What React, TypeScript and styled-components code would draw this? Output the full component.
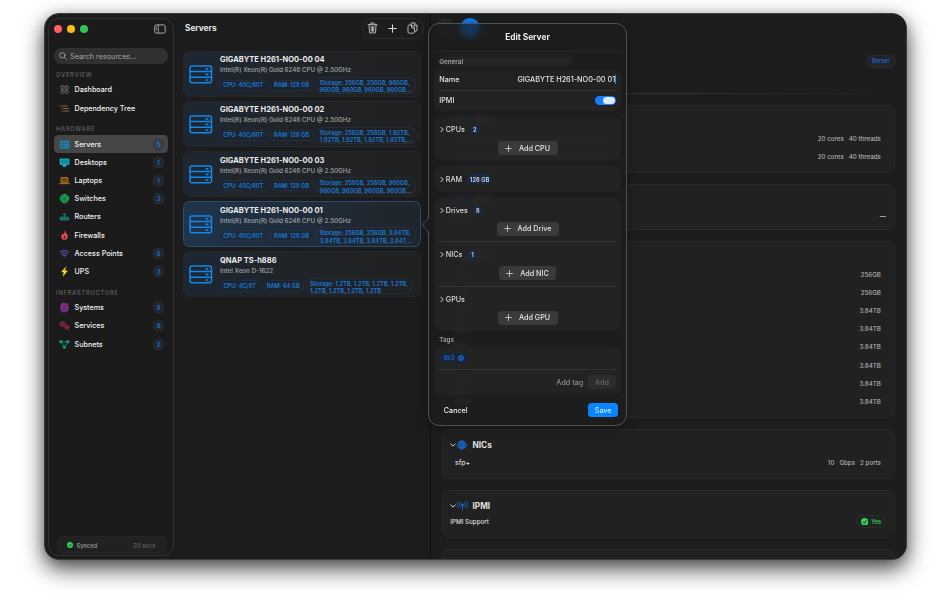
import React from 'react';
import styled, { createGlobalStyle, css } from 'styled-components';

const Global = createGlobalStyle`
  * { box-sizing: border-box; }
  html, body { margin: 0; background: #fff; }
  body { font-family: Inter, "Liberation Sans", sans-serif; font-size: 7.2px; font-weight: 500; color: #e6e6e6; }
`;

const Desktop = styled.main`
  width: 950px; height: 594px; overflow: hidden; background: #fff; padding: 13px 0 0 43.5px;
`;
const Window = styled.div`
  position: relative; width: 863px; height: 547px; border-radius: 15px; background: #1c1c1d;
  border: 1px solid #3c3c3c; display: flex;
  box-shadow: 0 9px 22px rgba(0,0,0,.7), 0 2px 12px rgba(0,0,0,.14);
`;

/* ---------- sidebar ---------- */
const Sidebar = styled.aside`
  width: 126px; margin: 4px 0 3px 3.5px; border: 1px solid #323234; border-radius: 11px;
  background: #1b1b1c; display: flex; flex-direction: column; padding: 0 5px; flex: none;
`;
const TitleBar = styled.div`
  height: 19px; display: flex; align-items: center; justify-content: space-between; padding: 0 2px 0 0;
`;
const Lights = styled.div` display: flex; gap: 5px; `;
const Light = styled.span<{ $c: string }>`
  width: 8px; height: 8px; border-radius: 50%; background: ${p => p.$c};
`;
const Search = styled.div`
  height: 16px; margin: 10px 0 0; border-radius: 8px; background: #303031; color: #a4a4a5;
  display: flex; align-items: center; gap: 3px; padding-left: 5px; font-weight: 400; font-size: 7.25px;
`;
const GroupTitle = styled.h2<{ $top: number }>`
  margin: ${p => p.$top}px 0 0; height: 10px; line-height: 10px; padding-left: 2px;
  font-size: 5.6px; font-weight: 600; letter-spacing: 0.86px; color: #5c5c5d;
`;
const NavList = styled.nav`
  display: flex; flex-direction: column; margin-top: .6px;
`;
const NavItem = styled.div<{ $active?: boolean }>`
  height: 18.2px; display: flex; align-items: center; padding: 0 4px 0 5px; border-radius: 4.5px;
  font-size: 7.18px; color: #f4f4f4;
  background: ${p => (p.$active ? '#464646' : 'transparent')};
`;
const NavIcon = styled.span`
  width: 11px; height: 11px; margin-right: 4.5px; display: flex; align-items: center; justify-content: center; flex: none;
`;
const Count = styled.span<{ $active?: boolean }>`
  margin-left: auto; width: 11px; height: 11px; border-radius: 50%; display: grid; place-items: center;
  font-size: 5.7px; font-weight: 600; color: #1d74da;
  background: ${p => (p.$active ? '#39404a' : '#20262e')}; box-shadow: inset 0 0 0 .5px #30353b;
`;
const SyncBar = styled.div`
  margin: auto 2.5px 1px; height: 18px; border-radius: 5px; background: #212122; display: flex; align-items: center;
  padding: 0 9px 0 9.5px; font-size: 5.7px; font-weight: 600; color: #929292; border: .5px solid #262627;
`;
const SyncTime = styled.span` margin-left: auto; color: #5d5d5e; font-size: 5.85px; `;
const SyncText = styled.span` margin-left: 3.5px; `;

/* ---------- list ---------- */
const ListPane = styled.section`
  width: 256.5px; flex: none; padding: 0 8.2px 0 8.5px; display: flex; flex-direction: column; border-right: 1px solid #0f0f10;
  background: #1c1c1d;
`;
const ListHeader = styled.header`
  height: 28.5px; display: flex; align-items: center; justify-content: space-between;
`;
const ListTitle = styled.h1` margin: 0 0 0 2.5px; font-size: 8.25px; font-weight: 700; `;
const Toolbar = styled.div`
  width: 62px; height: 21px; border-radius: 11px; border: 1px solid #2c2c2d; background: #1d1d1e; display: flex;
  align-items: center; justify-content: space-between; padding: 0 5px 0 4px; margin-right: -2.8px;
`;
const Cards = styled.div` display: flex; flex-direction: column; gap: 4.15px; margin-top: 8.2px; `;
const Card = styled.article<{ $active?: boolean }>`
  height: 46px; border-radius: 6.5px; display: flex; padding: 3.6px 0 0 6px;
  border: 1px solid ${p => (p.$active ? '#2a4b74' : '#25282b')};
  background: ${p => (p.$active
    ? 'linear-gradient(100deg, #20344b 0%, #1f2f41 30%, #20262d 85%)'
    : 'linear-gradient(100deg, #1e2732 0%, #1f252b 35%, #202122 80%)')};
`;
const CardIcon = styled.div` margin: 9.4px .6px 0 -.6px; height: 19px; width: 30.5px; flex: none; `;
const CardBody = styled.div` flex: 1; min-width: 0; `;
const CardTitle = styled.div` font-size: 7.5px; line-height: 10px; font-weight: 700; color: #ececec; white-space: nowrap; `;
const CardSub = styled.div` font-size: 6.25px; line-height: 11px; color: #a5a5a5; white-space: nowrap; `;
const Chips = styled.div` display: flex; align-items: center; gap: 2px; margin-left: -1px; height: 18px; `;
const Chip = styled.span<{ $w: number }>`
  width: ${p => p.$w}px; height: 11.5px; border-radius: 6px; display: grid; place-items: center; white-space: nowrap;
  font-size: 5.65px; font-weight: 600; color: #1d7bd6; background: rgba(24,38,54,.45); border: .5px solid rgba(60,75,90,.25);
`;
const StorageChip = styled.span`
  height: 16.5px; border-radius: 7px; padding: 1px 3.3px 0; font-size: 5.72px; line-height: 7.2px; font-weight: 600; color: #1d7bd6;
  white-space: nowrap; background: rgba(24,38,54,.25); border: .5px solid rgba(60,75,90,.25);
`;

/* ---------- detail ---------- */
const Detail = styled.section`
  flex: 1; min-width: 0; overflow: hidden; padding: 0 11px 0 11px; background: #1d1d1e;
  border-radius: 0 14px 14px 0; display: flex; flex-direction: column;
`;
const DetailToolbar = styled.div` height: 28px; flex: none; display: flex; align-items: center; gap: 5px; margin-left: -6.5px; `;
const RoundButton = styled.span<{ $blue?: boolean }>`
  width: 20px; height: 20px; border-radius: 50%; background: ${p => (p.$blue ? '#0a7cf5' : '#2a2a2b')};
  display: grid; place-items: center;
`;
const DetailHead = styled.div`
  height: 38px; flex: none; display: flex; align-items: center; justify-content: space-between;
`;
const Obscured = styled.span<{ $w: number; $h?: number }>`
  width: ${p => p.$w}px; height: ${p => p.$h ?? 5}px; border-radius: 2px; background: #58585a;
`;
const TypeBadge = styled.span`
  height: 13px; padding: 0 4.8px; border-radius: 5.5px; background: #222428; border: .5px solid #2a2b2e; color: #1d66cc;
  font-size: 5.6px; font-weight: 600; display: grid; place-items: center; margin-right: -1px;
`;
const FadeLine = styled.div`
  height: 1px; flex: none; margin: 13px 0 11px; background: linear-gradient(90deg, #2c2c2d, #333334 50%, #1d1d1e);
`;
const Panel = styled.div<{ $h: number; $gap?: number }>`
  height: ${p => p.$h}px; flex: none; margin-bottom: ${p => p.$gap ?? 11}px; border: 1px solid #2a2a2b; border-radius: 7.5px;
  background: #212122; padding: 6.5px 12.6px 0 7px;
`;
const PanelTitle = styled.div`
  height: 17px; display: flex; align-items: center; font-size: 8.25px; font-weight: 700; color: #e0e0e0;
`;
const PanelIcon = styled.span` width: 11px; height: 11px; margin: 0 4.7px 0 1.3px; display: grid; place-items: center; `;
const PanelRows = styled.div` padding-left: 5.5px; `;
const PanelRow = styled.div`
  height: 18.2px; display: flex; align-items: center; justify-content: space-between; font-size: 6.2px; color: #b2b2b2;
`;
const RowName = styled.span` color: #dcdcdc; font-size: 6.9px; `;
const RowValue = styled.span` display: flex; gap: 5px; `;
const SupportRow = styled.div`
  height: 15px; display: flex; align-items: center; justify-content: space-between; font-size: 6.24px; color: #dedede;
  margin: 0 -5px 0 .8px;
`;
const YesBadge = styled.span`
  height: 12.5px; width: 30px; border-radius: 6.5px; background: #202522; border: .5px solid #29302b; color: #34c759;
  display: flex; align-items: center; justify-content: center; gap: 3px; font-size: 5.7px; font-weight: 600;
`;

/* ---------- popover ---------- */
const Popover = styled.div`
  position: absolute; left: 383.5px; top: 9px; width: 199px; height: 403px; border-radius: 11px;
  border: 1px solid #515152; background: rgba(28,28,29,.72); backdrop-filter: blur(3px);
  box-shadow: 0 3px 12px rgba(0,0,0,.35); display: flex; flex-direction: column; padding: 0 5px;
`;
const Arrow = styled.svg` position: absolute; left: 376.5px; top: 198px; width: 9px; height: 26px; `;
const PopTitle = styled.div`
  height: 27.5px; flex: none; display: grid; place-items: center; font-size: 8.3px; font-weight: 700; color: #ececec; border-bottom: 1px solid #272728;
`;
const GroupLabel = styled.div<{ $h: number }>`
  height: ${p => p.$h}px; flex: none; padding: 6px 0 0 5.2px; line-height: 9px; font-size: 6.35px; font-weight: 600; color: #a1a1a1;
`;
const Group = styled.div<{ $h: number; $gap?: number }>`
  height: ${p => p.$h}px; flex: none; margin-bottom: ${p => p.$gap ?? 6.5}px; border-radius: 6.5px; background: rgba(38,38,39,.68);
  padding: 0 5.3px; display: flex; flex-direction: column;
`;
const Field = styled.div<{ $h: number; $line?: boolean }>`
  height: ${p => p.$h}px; flex: none; display: flex; align-items: center; justify-content: space-between; font-size: 7.2px; color: #e4e4e4;
  ${p => p.$line && css`border-bottom: 1px solid #333334;`}
`;
const NameValue = styled.span`
  font-size: 7.28px; border-right: 1px solid #2d8cff; height: 9px; line-height: 9px; margin-right: -.5px;
`;
const Toggle = styled.span`
  width: 20.5px; height: 9.5px; border-radius: 5px; background: #157efb; display: flex; justify-content: flex-end; padding: 1px;
`;
const Knob = styled.span` width: 12px; height: 7.5px; border-radius: 4px; background: #dcebff; `;
const Section = styled.div<{ $h: number; $line?: boolean; $pad: number }>`
  height: ${p => p.$h}px; flex: none; padding-top: ${p => p.$pad}px; display: flex; flex-direction: column; align-items: center;
  ${p => p.$line && css`border-bottom: 1px solid #333334;`}
`;
const SectionHead = styled.div`
  align-self: stretch; height: 11px; display: flex; align-items: center; padding-left: .5px; font-size: 7.2px; color: #dedede;
`;
const HeadText = styled.span` margin-left: 2px; `;
const Pill = styled.span<{ $wide?: boolean }>`
  margin-left: 5px; height: 10px; min-width: 10px; padding: ${p => (p.$wide ? '0 3px' : '0')}; border-radius: 5px; background: #1b2a40;
  color: #cfdcf0; font-size: 5.7px; font-weight: 600; display: grid; place-items: center;
`;
const GrayButton = styled.span<{ $w: number; $dim?: boolean }>`
  width: ${p => p.$w}px; height: 14px; border-radius: 3.5px; flex: none; display: flex; align-items: center; justify-content: center; gap: 7px;
  background: ${p => (p.$dim ? '#2c2c2d' : '#3a3a3b')}; color: ${p => (p.$dim ? '#666' : '#e4e4e4')}; font-size: 7.2px;
`;
const AddSlot = styled.div<{ $top: number }>` margin-top: ${p => p.$top}px; `;
const Tag = styled.span`
  height: 11.5px; width: 29px; border-radius: 6px; background: #1a2536; color: #146ad8; font-size: 5.7px; font-weight: 600;
  display: flex; align-items: center; justify-content: center; gap: 3px;
`;
const TagAction = styled.div<{ $h: number }>`
  height: ${p => p.$h}px; display: flex; align-items: center; justify-content: flex-end; gap: 5px; color: #8f8f90; font-size: 7.2px;
`;
const PopFooter = styled.div`
  flex: 1; display: flex; align-items: center; justify-content: space-between; padding: 1px 2.6px 0 9.8px; font-size: 7.2px; color: #ededed;
`;
const Save = styled.span`
  width: 30.5px; height: 14px; border-radius: 3.5px; background: #0a84ff; color: #b9f0ff; display: grid; place-items: center;
`;

/* ---------- icons ---------- */
type IconProps = { children: React.ReactNode; c: string; w?: number; h?: number; box?: string; sw?: number };
const Svg = ({ children, c, w = 11, h = 11, box = '0 0 22 22', sw = 1.8 }: IconProps) => (
  <svg width={w} height={h} viewBox={box} fill="none" stroke={c} strokeWidth={sw} strokeLinecap="round" strokeLinejoin="round">{children}</svg>
);

const navIcons: Record<string, React.ReactNode> = {
  dashboard: <Svg c="#77777a" sw={1.7}><rect x="4" y="4" width="6" height="6" rx="1.5" /><rect x="12.5" y="4" width="6" height="6" rx="1.5" /><rect x="4" y="12.5" width="6" height="6" rx="1.5" /><rect x="12.5" y="12.5" width="6" height="6" rx="1.5" /></Svg>,
  tree: <Svg c="#967052" sw={1.8}><path d="M5.5 6h11M8.5 11h10.5M8.5 16h11M2 6h.1M5 11h.1M5 16h.1" /></Svg>,
  servers: <Svg c="#237da8"><rect x="2" y="4" width="18" height="14.5" rx="1.5" fill="#237da8" /><path d="M2 9h18M2 13.8h18M7 4v14" stroke="#355466" strokeWidth="1.2" /></Svg>,
  desktops: <Svg c="#19b7cc"><rect x="2" y="4" width="18" height="11" rx="1.2" fill="#138c9f" /><path d="M8 18.5h6M9.5 16h3v2h-3z" fill="#19b7cc" /></Svg>,
  laptops: <Svg c="#c47f1c" sw={1.6}><rect x="4" y="5" width="14" height="10.5" rx="1" fill="#6d4a1c" /><path d="M1 17.3h20" /></Svg>,
  switches: <Svg c="#19ad52" sw={1.5}><circle cx="11" cy="11" r="8.5" fill="#126f38" /><path d="M11 3l3 5 6 .5M19 12l-5 3-1 5M9 19l-2-5-5-2M3 8l6 0 2-5M9 8h5l1 5-4 3-4-3z" /></Svg>,
  routers: <Svg c="#168a82" sw={1.7}><rect x="2" y="12.5" width="18" height="5.5" rx="2" fill="#116660" /><path d="M11 12V7M7.5 6.5a5 5 0 0 1 7 0M5 16h.2M8 16h.2" /></Svg>,
  firewalls: <Svg c="#f0474f" sw={1}><path d="M11.5 2.5c1 4 5.5 5 5.5 10.5a6 6 0 0 1-12 .3c0-3 1.5-4.5 2-5.8 1 .6 1.6 1.3 1.9 2.2C10.800 8 11.5 5.5 11.5 2.5z" fill="#f0474f" /><path d="M11 11.500c2.500 2 2.500 5-.2 5.800-2.200-.8-2-3.600.2-5.800z" fill="#1b1b1c" stroke="none" /></Svg>,
  wifi: <Svg c="#6c5ce8" sw={2}><path d="M2.5 8.5a12 12 0 0 1 17 0M5.5 12a8 8 0 0 1 11 0M8.5 15.2a4 4 0 0 1 5 0" /><circle cx="11" cy="17.5" r="1" fill="#6c5ce8" stroke="none" /></Svg>,
  ups: <Svg c="#f7e11b" sw={.8}><path d="M13.5 2L5 12h5l-2 8.5L17 9.5h-5.5z" fill="#f7e11b" /></Svg>,
  systems: <Svg c="#a239b5" sw={2}><rect x="4" y="4" width="14" height="14" rx="3" fill="#57245f" /><rect x="8.5" y="8.5" width="5" height="5" fill="#1b1b1c" /><path d="M8 3v-.5M14 3v-.5M8 19.5v.5M14 19.5v.5" /></Svg>,
  services: <Svg c="#b02b4d" sw={1.9}><circle cx="7" cy="8" r="4.7" strokeDasharray="2.2 .8" /><circle cx="7" cy="8" r="1.5" /><circle cx="16" cy="14.5" r="4.2" strokeDasharray="2.2 .8" /><circle cx="16" cy="14.5" r="1.3" /></Svg>,
  subnets: <Svg c="#139a7c" sw={1.6}><rect x="2" y="3.5" width="4" height="4" fill="#139a7c" /><rect x="16" y="3.5" width="4" height="4" fill="#139a7c" /><rect x="9" y="14.5" width="4" height="4" fill="#139a7c" /><path d="M6 6h10M5 8l5 6.5M17 8l-5 6.5" /></Svg>,
};

const ServerIcon = () => (
  <Svg c="#1288ea" w={24} h={19} box="0 0 24 19" sw={1.5}>
    <rect x="1" y="1" width="21.5" height="16.8" rx="2" /><path d="M1 6.5h21.5M1 12.2h21.5" />
    <path d="M17.3 3.8h1.4M17.3 9.4h1.4M17.3 15h1.4" strokeWidth="1.7" />
  </Svg>
);
const Globe = () => (
  <Svg c="#1e78ea" w={10} h={10} sw={1.4}><circle cx="11" cy="11" r="9.3" fill="#12305a" /><ellipse cx="11" cy="11" rx="4.2" ry="9" /><path d="M2 11h18M4 5.800h14M4 16.200h14M11 2v18" /></Svg>
);
const Antenna = () => (
  <Svg c="#1b66c8" sw={1.8}><circle cx="11" cy="9.5" r="2" fill="#1b66c8" /><path d="M11 11v9M6.5 5.5a6 6 0 0 0 0 8M15.5 5.5a6 6 0 0 1 0 8M3 3a10 10 0 0 0 0 13M19 3a10 10 0 0 1 0 13" /></Svg>
);
const ChevronRight = () => <Svg c="#e4e4e4" w={4} h={7} box="0 0 4 7" sw={1}><path d="M1 1.4L3.1 3.5 1 5.600" /></Svg>;
const ChevronDown = () => <Svg c="#d8d8d8" w={6} h={6} box="0 0 6 6" sw={1}><path d="M.8 2L3 4.1 5.2 2" /></Svg>;
const PlusIcon = ({ s = 7 }: { s?: number }) => <Svg c="#d6d6d6" w={s} h={s} box="0 0 8 8" sw={s > 8 ? .95 : .9}><path d="M4 .6v6.8M.6 4h6.8" /></Svg>;
const CheckBadge = ({ s, c }: { s: number; c: string }) => (
  <svg width={s} height={s} viewBox="0 0 8 8"><circle cx="4" cy="4" r="4" fill={c} /><path d="M2.3 4.2l1.2 1.3 2.2-3" fill="none" stroke="#15251a" strokeWidth="1" /></svg>
);

/* ---------- data ---------- */
type Nav = [string, string, number?];
const groups: { title: string; top: number; items: Nav[] }[] = [
  { title: 'OVERVIEW', top: 6.2, items: [['dashboard', 'Dashboard'], ['tree', 'Dependency Tree']] },
  { title: 'HARDWARE', top: 7.3, items: [['servers', 'Servers', 5], ['desktops', 'Desktops', 1], ['laptops', 'Laptops', 1], ['switches', 'Switches', 3], ['routers', 'Routers'], ['firewalls', 'Firewalls'], ['wifi', 'Access Points', 6], ['ups', 'UPS', 3]] },
  { title: 'INFRASTRUCTURE', top: 7.5, items: [['systems', 'Systems', 8], ['services', 'Services', 9], ['subnets', 'Subnets', 2]] },
];
const gold = 'Intel(R) Xeon(R) Gold 6248 CPU @ 2.50GHz';
const servers = [
  { name: 'GIGABYTE H261-NO0-00 04', cpu: gold, cores: 'CPU: 40C/80T', ram: 'RAM: 128 GB', st: ['Storage: 256GB, 256GB, 960GB,', '960GB, 960GB, 960GB, 960GB...'], w: [48.5, 44] },
  { name: 'GIGABYTE H261-NO0-00 02', cpu: gold, cores: 'CPU: 40C/80T', ram: 'RAM: 128 GB', st: ['Storage: 256GB, 256GB, 1.92TB,', '1.92TB, 1.92TB, 1.92TB, 1.92TB,...'], w: [48.5, 44] },
  { name: 'GIGABYTE H261-NO0-00 03', cpu: gold, cores: 'CPU: 40C/80T', ram: 'RAM: 128 GB', st: ['Storage: 256GB, 256GB, 960GB,', '960GB, 960GB, 960GB, 960GB...'], w: [48.5, 44] },
  { name: 'GIGABYTE H261-NO0-00 01', cpu: gold, cores: 'CPU: 40C/80T', ram: 'RAM: 128 GB', st: ['Storage: 256GB, 256GB, 3.84TB,', '3.84TB, 3.84TB, 3.84TB, 3.84T...'], w: [48.5, 44] },
  { name: 'QNAP TS-h886', cpu: 'Intel Xeon D-1622', cores: 'CPU: 4C/8T', ram: 'RAM: 64 GB', st: ['Storage: 1.2TB, 1.2TB, 1.2TB, 1.2TB,', '1.2TB, 1.2TB, 1.2TB, 1.2TB'], w: [41.5, 41.5] },
];
const drives = ['256GB', '256GB', '3.84TB', '3.84TB', '3.84TB', '3.84TB', '3.84TB', '3.84TB'];

const Disclosure = ({ label, badge, wide }: { label: string; badge?: string; wide?: boolean }) => (
  <SectionHead><ChevronRight /><HeadText>{label}</HeadText>{badge && <Pill $wide={wide}>{badge}</Pill>}</SectionHead>
);
const PanelHead = ({ label, icon = <Globe /> }: { label?: string; icon?: React.ReactNode }) => (
  <PanelTitle><ChevronDown /><PanelIcon>{icon}</PanelIcon>{label ?? <Obscured $w={22} $h={6} />}</PanelTitle>
);

export default function App() {
  return (
    <>
      <Global />
      <Desktop>
        <Window>
          <Sidebar>
            <TitleBar>
              <Lights><Light $c="#ff5f62" /><Light $c="#fdbc0f" /><Light $c="#2fc653" /></Lights>
              <svg width="12" height="10" viewBox="0 0 12 10" fill="none" stroke="#b2b2b2" strokeWidth=".95">
                <rect x=".7" y=".9" width="10.5" height="8.2" rx="1.7" /><path d="M4.3 1v8M1.9 2.9h1.2M1.9 4.4h1.2M1.9 5.9h1.2" strokeWidth=".8" />
              </svg>
            </TitleBar>
            <Search>
              <Svg c="#a4a4a5" w={8} h={8} box="0 0 8 8" sw={.85}><circle cx="3.3" cy="3.3" r="2.6" /><path d="M5.3 5.3l2 2" /></Svg>
              Search resources...
            </Search>
            {groups.map(g => (
              <React.Fragment key={g.title}>
                <GroupTitle $top={g.top}>{g.title}</GroupTitle>
                <NavList>
                  {g.items.map(([icon, label, count]) => (
                    <NavItem key={label} $active={label === 'Servers'}>
                      <NavIcon>{navIcons[icon]}</NavIcon>{label}
                      {count !== undefined && <Count $active={label === 'Servers'}>{count}</Count>}
                    </NavItem>
                  ))}
                </NavList>
              </React.Fragment>
            ))}
            <SyncBar><CheckBadge s={6} c="#32cf5b" /><SyncText>Synced</SyncText><SyncTime>20 secs</SyncTime></SyncBar>
          </Sidebar>

          <ListPane>
            <ListHeader>
              <ListTitle>Servers</ListTitle>
              <Toolbar>
                <Svg c="#c4c4c4" w={11} h={12} box="0 0 11 12" sw={.9}><path d="M1 2.7h9M3.8 2.5V1h3.4v1.5M2 2.9l.5 8h6l.5-8M4.2 4.6l.1 4.6M5.5 4.6v4.6M6.8 4.6l-.1 4.6" /></Svg>
                <PlusIcon s={9} />
                <Svg c="#c4c4c4" w={11} h={12} box="0 0 11 12" sw={.9}><path d="M4 3V1.8q0-1 1-1h2.3L10 3.5v4.7q0 1-1 1H8M7.2 1v2.7H10M1 4q0-1 1-1h2.7L7.5 5.8v4.4q0 1-1 1H2q-1 0-1-1zM4.6 3.2V6h2.7" /></Svg>
              </Toolbar>
            </ListHeader>
            <Cards>
              {servers.map(s => (
                <Card key={s.name} $active={s.name.endsWith('01')}>
                  <CardIcon><ServerIcon /></CardIcon>
                  <CardBody>
                    <CardTitle>{s.name}</CardTitle>
                    <CardSub>{s.cpu}</CardSub>
                    <Chips>
                      <Chip $w={s.w[0]}>{s.cores}</Chip><Chip $w={s.w[1]}>{s.ram}</Chip>
                      <StorageChip>{s.st[0]}<br />{s.st[1]}</StorageChip>
                    </Chips>
                  </CardBody>
                </Card>
              ))}
            </Cards>
          </ListPane>

          <Detail>
            <DetailToolbar><RoundButton /><RoundButton $blue /></DetailToolbar>
            <DetailHead><Obscured $w={130} $h={7} /><TypeBadge>Server</TypeBadge></DetailHead>
            <FadeLine />
            <Panel $h={68}>
              <PanelHead />
              <PanelRows>
                {[0, 1].map(i => (
                  <PanelRow key={i}><Obscured $w={153} $h={4} /><RowValue><span>20 cores</span><span>40 threads</span></RowValue></PanelRow>
                ))}
              </PanelRows>
            </Panel>
            <Panel $h={45.5}>
              <PanelHead />
              <SupportRow><Obscured $w={22} $h={4} /><span>—</span></SupportRow>
            </Panel>
            <Panel $h={177.5}>
              <PanelHead />
              <PanelRows>{drives.map((d, i) => <PanelRow key={i}><Obscured $w={14} $h={4} />{d}</PanelRow>)}</PanelRows>
            </Panel>
            <Panel $h={49.7}>
              <PanelHead label="NICs" />
              <PanelRows><PanelRow><RowName>sfp+</RowName><RowValue><span>10</span><span>Gbps</span><span>2 ports</span></RowValue></PanelRow></PanelRows>
            </Panel>
            <Panel $h={48.5}>
              <PanelHead label="IPMI" icon={<Antenna />} />
              <SupportRow>IPMI Support<YesBadge><CheckBadge s={7.5} c="#32cf5b" />Yes</YesBadge></SupportRow>
            </Panel>
            <Panel $h={40} />
          </Detail>

          <Popover>
            <PopTitle>Edit Server</PopTitle>
            <GroupLabel $h={18}>General</GroupLabel>
            <Group $h={41.5} $gap={6}>
              <Field $h={21} $line><span>Name</span><NameValue>GIGABYTE H261-NO0-00 01</NameValue></Field>
              <Field $h={20}><span>IPMI</span><Toggle><Knob /></Toggle></Field>
            </Group>
            <Group $h={42.5}>
              <Section $h={42.5} $pad={7}><Disclosure label="CPUs" badge="2" /><AddSlot $top={6}><GrayButton $w={60}><PlusIcon />Add CPU</GrayButton></AddSlot></Section>
            </Group>
            <Group $h={26} $gap={5.5}>
              <Section $h={26} $pad={7.5}><Disclosure label="RAM" badge="128 GB" wide /></Section>
            </Group>
            <Group $h={132} $gap={0}>
              <Section $h={44.5} $pad={7.3} $line><Disclosure label="Drives" badge="8" /><AddSlot $top={6}><GrayButton $w={62}><PlusIcon />Add Drive</GrayButton></AddSlot></Section>
              <Section $h={44.5} $pad={7.4} $line><Disclosure label="NICs" badge="1" /><AddSlot $top={6}><GrayButton $w={57}><PlusIcon />Add NIC</GrayButton></AddSlot></Section>
              <Section $h={43} $pad={7}><Disclosure label="GPUs" /><AddSlot $top={6}><GrayButton $w={60}><PlusIcon />Add GPU</GrayButton></AddSlot></Section>
            </Group>
            <GroupLabel $h={17.5}>Tags</GroupLabel>
            <Group $h={47.5} $gap={0}>
              <Field $h={22.5} $line>
                <Tag>ttc2<Svg c="#146ad8" w={6} h={6} box="0 0 8 8" sw={.8}><circle cx="4" cy="4" r="3.5" fill="#145fc2" /><path d="M2.8 2.8l2.4 2.4M5.2 2.8L2.8 5.2" stroke="#1a2536" /></Svg></Tag>
              </Field>
              <TagAction $h={25}><span>Add tag</span><GrayButton $w={27.5} $dim>Add</GrayButton></TagAction>
            </Group>
            <PopFooter><span>Cancel</span><Save>Save</Save></PopFooter>
          </Popover>
          <Arrow viewBox="0 0 9 26">
            <path d="M8.2 0C8.2 6 7 8 4 10.5Q-.5 13 4 15.5C7 18 8.2 20 8.2 26L9 26V0z" fill="#1c1c1d" />
            <path d="M7.5 0C7.5 6 6.5 7.5 4 10Q-.8 13 4 16C6.5 18.5 7.5 20 7.5 26" fill="none" stroke="#515152" strokeWidth="1" />
          </Arrow>
        </Window>
      </Desktop>
    </>
  );
}
